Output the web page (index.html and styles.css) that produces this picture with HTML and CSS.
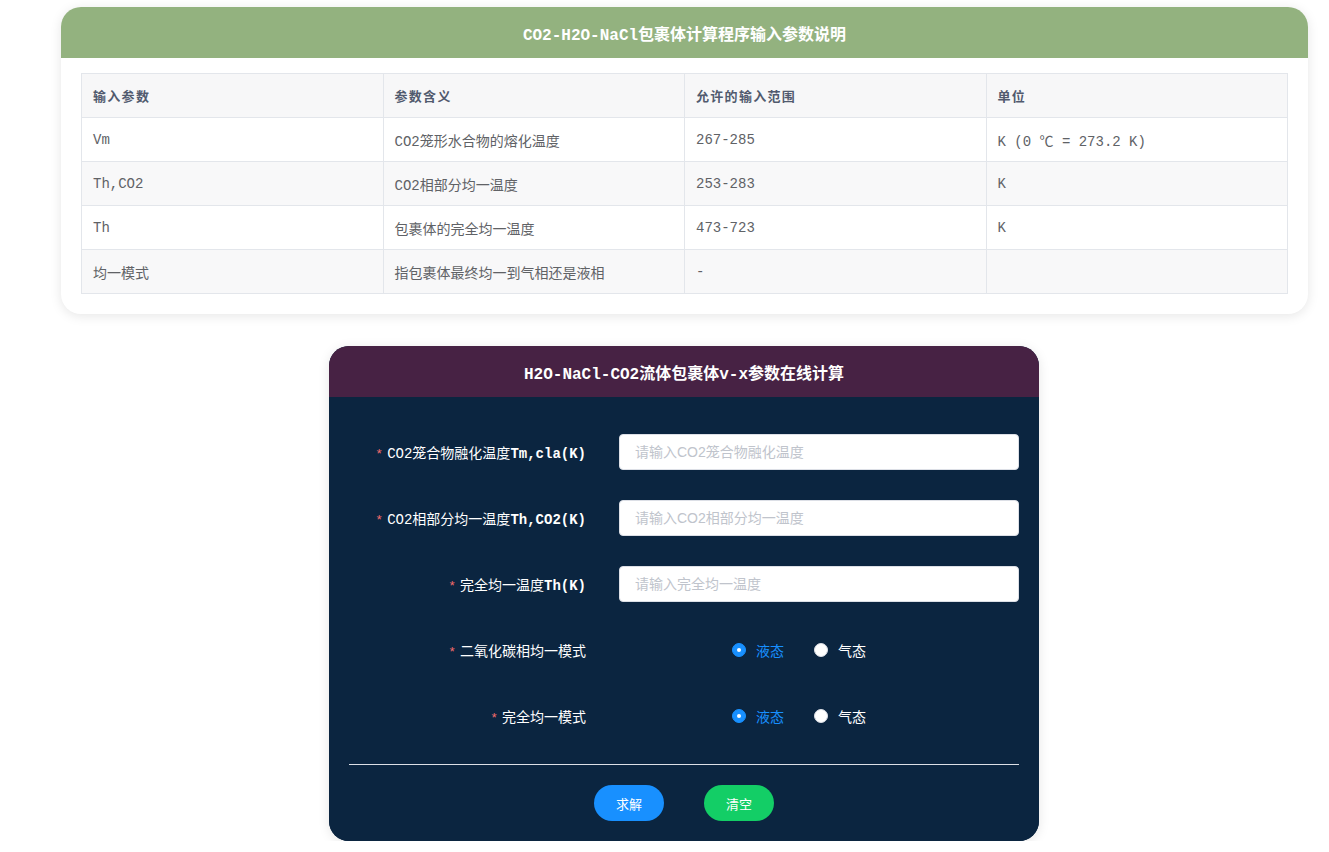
FILE: index.html
```html
<!DOCTYPE html>
<html lang="zh-CN">
<head>
<meta charset="utf-8">
<title>CO2-H2O-NaCl包裹体计算</title>
<link rel="stylesheet" href="styles.css">
</head>
<body>
<div class="page">
  <section class="card info-card">
    <header class="card-head head-green">CO2-H2O-NaCl包裹体计算程序输入参数说明</header>
    <div class="card-body info-body">
      <table class="param-table">
        <thead>
          <tr><th>输入参数</th><th>参数含义</th><th>允许的输入范围</th><th>单位</th></tr>
        </thead>
        <tbody>
          <tr><td>Vm</td><td>CO2笼形水合物的熔化温度</td><td>267-285</td><td>K (0 ℃ = 273.2 K)</td></tr>
          <tr class="alt"><td>Th,CO2</td><td>CO2相部分均一温度</td><td>253-283</td><td>K</td></tr>
          <tr><td>Th</td><td>包裹体的完全均一温度</td><td>473-723</td><td>K</td></tr>
          <tr class="alt"><td>均一模式</td><td>指包裹体最终均一到气相还是液相</td><td>-</td><td></td></tr>
        </tbody>
      </table>
    </div>
  </section>

  <section class="card calc-card">
    <header class="card-head head-purple">H2O-NaCl-CO2流体包裹体v-x参数在线计算</header>
    <div class="card-body calc-body">
      <form class="calc-form">
        <div class="form-row">
          <label class="form-label"><span class="req">*</span>CO2笼合物融化温度<b>Tm,cla(K)</b></label>
          <input class="form-input" type="text" placeholder="请输入CO2笼合物融化温度">
        </div>
        <div class="form-row">
          <label class="form-label"><span class="req">*</span>CO2相部分均一温度<b>Th,CO2(K)</b></label>
          <input class="form-input" type="text" placeholder="请输入CO2相部分均一温度">
        </div>
        <div class="form-row">
          <label class="form-label"><span class="req">*</span>完全均一温度<b>Th(K)</b></label>
          <input class="form-input" type="text" placeholder="请输入完全均一温度">
        </div>
        <div class="form-row">
          <label class="form-label"><span class="req">*</span>二氧化碳相均一模式</label>
          <div class="radio-group">
            <span class="radio checked"><span class="dot"></span><span class="radio-text">液态</span></span>
            <span class="radio"><span class="dot"></span><span class="radio-text">气态</span></span>
          </div>
        </div>
        <div class="form-row">
          <label class="form-label"><span class="req">*</span>完全均一模式</label>
          <div class="radio-group">
            <span class="radio checked"><span class="dot"></span><span class="radio-text">液态</span></span>
            <span class="radio"><span class="dot"></span><span class="radio-text">气态</span></span>
          </div>
        </div>
        <hr class="divider">
        <div class="actions">
          <button type="button" class="btn btn-blue">求解</button>
          <button type="button" class="btn btn-green">清空</button>
        </div>
      </form>
    </div>
  </section>
</div>
</body>
</html>
```
FILE: styles.css
```css
* { box-sizing: border-box; }
html, body { margin: 0; padding: 0; background: #fff; }
body {
  font-family: "Liberation Mono", "Noto Sans CJK SC", monospace;
  padding-top: 7px;
}
.page {
  width: 1247px;
  margin-left: 61px;
  display: flex;
  flex-direction: column;
  align-items: flex-start;
  gap: 32px;
}
.card {
  border-radius: 20px;
  overflow: hidden;
  box-shadow: 0 2px 12px rgba(0, 0, 0, 0.10);
  background: #fff;
}
.info-card { width: 100%; }
.card-head {
  height: 51px;
  display: flex;
  align-items: center;
  justify-content: center;
  color: #fff;
  font-weight: bold;
  font-size: 16px;
  font-family: "Liberation Mono", "Noto Sans CJK SC", monospace;
}
.head-green { background: #93b27f; }
.head-purple { background: #472244; }

.info-body { padding: 15px 20px 20px; }
.param-table {
  width: 100%;
  border-collapse: collapse;
  table-layout: fixed;
  font-size: 14px;
}
.param-table th, .param-table td {
  border: 1px solid #e3e6eb;
  height: 44px;
  padding: 0 11px;
  text-align: left;
  vertical-align: middle;
}
.param-table th {
  background: #f7f7f8;
  color: #515a6e;
  font-weight: bold;
  font-size: 13px;
  letter-spacing: 1.3px;
  font-family: "Noto Sans CJK SC", sans-serif;
}
.param-table td { color: #606266; }
.param-table tr.alt td { background: #f8f8f9; }

.calc-card {
  width: 710px;
  margin-left: 268px;
  background: #0b2540;
}
.calc-body { background: #0b2540; padding: 37px 20px 20px; }
.calc-form { display: flex; flex-direction: column; }
.form-row {
  display: flex;
  align-items: center;
  height: 36px;
  margin-bottom: 30px;
}
.form-label {
  width: 270px;
  padding-right: 33px;
  text-align: right;
  color: #fff;
  font-size: 14px;
  white-space: nowrap;
}
.form-label b { font-weight: bold; }
.req {
  color: #f56c6c;
  margin-right: 4px;
  font-size: 13px;
}
.form-input {
  width: 400px;
  height: 36px;
  border: 1px solid #dcdfe6;
  border-radius: 4px;
  padding: 0 15px;
  font-family: "Liberation Sans", "Noto Sans CJK SC", sans-serif;
  font-size: 14px;
  color: #606266;
  background: #fff;
  outline: none;
}
.form-input::placeholder { color: #c0c4cc; }
.radio-group {
  display: flex;
  align-items: center;
  gap: 30px;
  padding-left: 113px;
}
.radio {
  display: inline-flex;
  align-items: center;
  gap: 10px;
  font-family: "Noto Sans CJK SC", sans-serif;
  font-size: 14px;
  color: #fff;
}
.dot {
  width: 14px;
  height: 14px;
  border-radius: 50%;
  background: #fff;
  border: 1px solid #dcdfe6;
  display: inline-flex;
  align-items: center;
  justify-content: center;
}
.radio.checked .dot { background: #1890ff; border-color: #1890ff; }
.radio.checked .dot::after {
  content: "";
  width: 4px;
  height: 4px;
  border-radius: 50%;
  background: #fff;
}
.radio.checked .radio-text { color: #1890ff; }
.divider {
  border: 0;
  border-top: 1px solid #dcdfe6;
  margin: 0 0 20px;
}
.actions {
  display: flex;
  justify-content: center;
  gap: 40px;
}
.btn {
  width: 70px;
  height: 36px;
  border: 0;
  border-radius: 18px;
  color: #fff;
  font-family: "Noto Sans CJK SC", sans-serif;
  font-size: 13px;
  cursor: pointer;
}
.btn-blue { background: #1890ff; }
.btn-green { background: #13ce66; }
```
